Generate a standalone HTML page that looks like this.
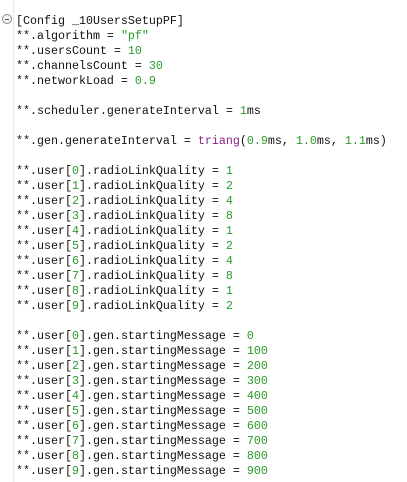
<!DOCTYPE html>
<html><head><style>
html,body{margin:0;padding:0;background:#fff;width:407px;height:482px;overflow:hidden}
.g{position:absolute;left:13px;top:0;width:1px;height:482px;background:#ebebeb}
pre{position:absolute;left:16px;top:14px;margin:0;font-family:"Liberation Mono",monospace;font-size:11.67px;line-height:15px;color:#111}
.n{color:#2a9a2a}.s{color:#2a9a2a}.f{color:#8a1e8a}
.c{position:absolute;left:2px;top:14px;width:8px;height:8px;border:1px solid #8a8a8a;border-radius:50%;background:#f4f4f4}
.c:after{content:"";position:absolute;left:2px;top:3.5px;width:4px;height:1px;background:#555}
</style></head><body>
<div class="g"></div><div class="c"></div>
<pre>[Config _10UsersSetupPF]
**.algorithm = <span class="s">"pf"</span>
**.usersCount = <span class="n">10</span>
**.channelsCount = <span class="n">30</span>
**.networkLoad = <span class="n">0.9</span>

**.scheduler.generateInterval = <span class="n">1</span>ms

**.gen.generateInterval = <span class="f">triang</span>(<span class="n">0.9</span>ms, <span class="n">1.0</span>ms, <span class="n">1.1</span>ms)

**.user[<span class="n">0</span>].radioLinkQuality = <span class="n">1</span>
**.user[<span class="n">1</span>].radioLinkQuality = <span class="n">2</span>
**.user[<span class="n">2</span>].radioLinkQuality = <span class="n">4</span>
**.user[<span class="n">3</span>].radioLinkQuality = <span class="n">8</span>
**.user[<span class="n">4</span>].radioLinkQuality = <span class="n">1</span>
**.user[<span class="n">5</span>].radioLinkQuality = <span class="n">2</span>
**.user[<span class="n">6</span>].radioLinkQuality = <span class="n">4</span>
**.user[<span class="n">7</span>].radioLinkQuality = <span class="n">8</span>
**.user[<span class="n">8</span>].radioLinkQuality = <span class="n">1</span>
**.user[<span class="n">9</span>].radioLinkQuality = <span class="n">2</span>

**.user[<span class="n">0</span>].gen.startingMessage = <span class="n">0</span>
**.user[<span class="n">1</span>].gen.startingMessage = <span class="n">100</span>
**.user[<span class="n">2</span>].gen.startingMessage = <span class="n">200</span>
**.user[<span class="n">3</span>].gen.startingMessage = <span class="n">300</span>
**.user[<span class="n">4</span>].gen.startingMessage = <span class="n">400</span>
**.user[<span class="n">5</span>].gen.startingMessage = <span class="n">500</span>
**.user[<span class="n">6</span>].gen.startingMessage = <span class="n">600</span>
**.user[<span class="n">7</span>].gen.startingMessage = <span class="n">700</span>
**.user[<span class="n">8</span>].gen.startingMessage = <span class="n">800</span>
**.user[<span class="n">9</span>].gen.startingMessage = <span class="n">900</span></pre>
</body></html>
